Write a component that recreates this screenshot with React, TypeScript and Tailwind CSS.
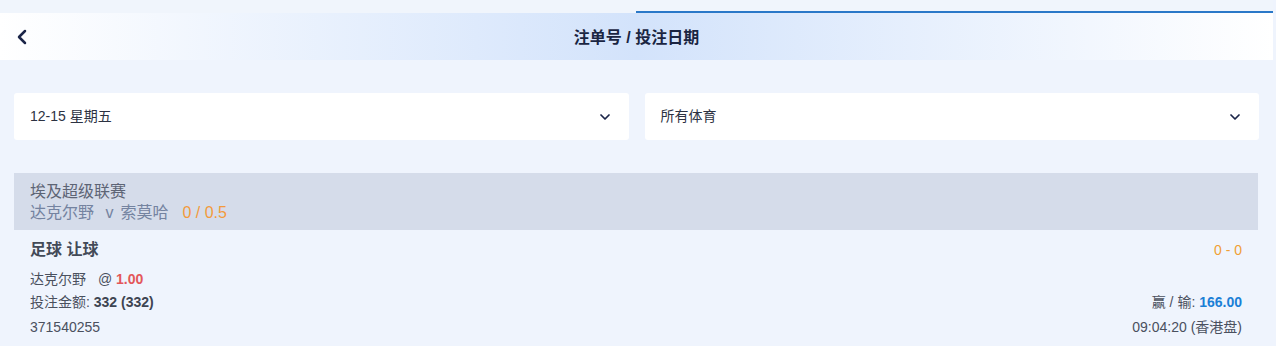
import { ChevronDown, ChevronLeft } from "lucide-react";

const font = "font-['Liberation_Sans','Noto_Sans_CJK_SC',sans-serif]";

function Select({ label }: { label: string }) {
	return (
		<div className="flex-1 h-[47px] bg-white rounded-[3px] flex items-center justify-between pl-4 pr-4">
			<span className="text-[14px] text-[#2c3242]">{label}</span>
			<ChevronDown className="w-4 h-4 text-[#1b2548]" strokeWidth={2.6} />
		</div>
	);
}

export default function App() {
	return (
		<div className={`${font} w-[1276px] h-[346px] bg-[#eff4fd] overflow-hidden`}>
			<div className="w-[1273px]">
				{/* top strip + tab line */}
				<div className="h-[13px] flex items-end bg-[#f0f5fc]">
					<div className="ml-[636px] flex-1 h-[2px] bg-[#2a78c8]"></div>
				</div>
				<div className="h-[47px] flex items-center relative bg-gradient-to-r from-white via-[#d3e3fb] to-white">
					<ChevronLeft className="absolute left-[10px] top-[12px] w-[24px] h-[24px] text-[#1b2548]" strokeWidth={2.5} />
					<p className="w-full text-center text-[16px] font-bold text-[#1a2542] pt-[3px]">注单号 / 投注日期</p>
				</div>

				<div className="px-[14px] pt-[33px] flex gap-4">
					<Select label="12-15 星期五" />
					<Select label="所有体育" />
				</div>

				<div className="mx-[14px] mt-[33px] w-[1244px]">
					<div className="h-[57px] bg-[#d5dcea] px-4 pt-[8px] text-[16px] leading-[21px]">
						<p className="text-[#5d6475]">埃及超级联赛</p>
						<p className="text-[#7483a0]">
							达克尔野 <span className="mx-[7px]">v</span>索莫哈
							<span className="ml-[14px] text-[#f39a3b]">0 / 0.5</span>
						</p>
					</div>
					<div className="px-4 pt-[10px] text-[14px] text-[#4a505e]">
						<div className="flex justify-between items-center h-[20px]">
							<p className="text-[16px] font-bold text-[#434a58]">足球 让球</p>
							<p className="text-[14px] text-[#f0a035]">0 - 0</p>
						</div>
						<p className="mt-[9px] leading-[20px]">
							达克尔野 <span className="ml-[8px]">@</span> <span className="font-bold text-[#e3575a]">1.00</span>
						</p>
						<div className="flex justify-between leading-[20px] mt-[3px]">
							<p>投注金额: <span className="font-bold text-[#3d4452]">332 (332)</span></p>
							<p>赢 / 输: <span className="font-bold text-[#1b7fd6]">166.00</span></p>
						</div>
						<div className="flex justify-between leading-[20px] mt-[5px]">
							<p>371540255</p>
							<p>09:04:20 (香港盘)</p>
						</div>
					</div>
				</div>
			</div>
		</div>
	);
}
